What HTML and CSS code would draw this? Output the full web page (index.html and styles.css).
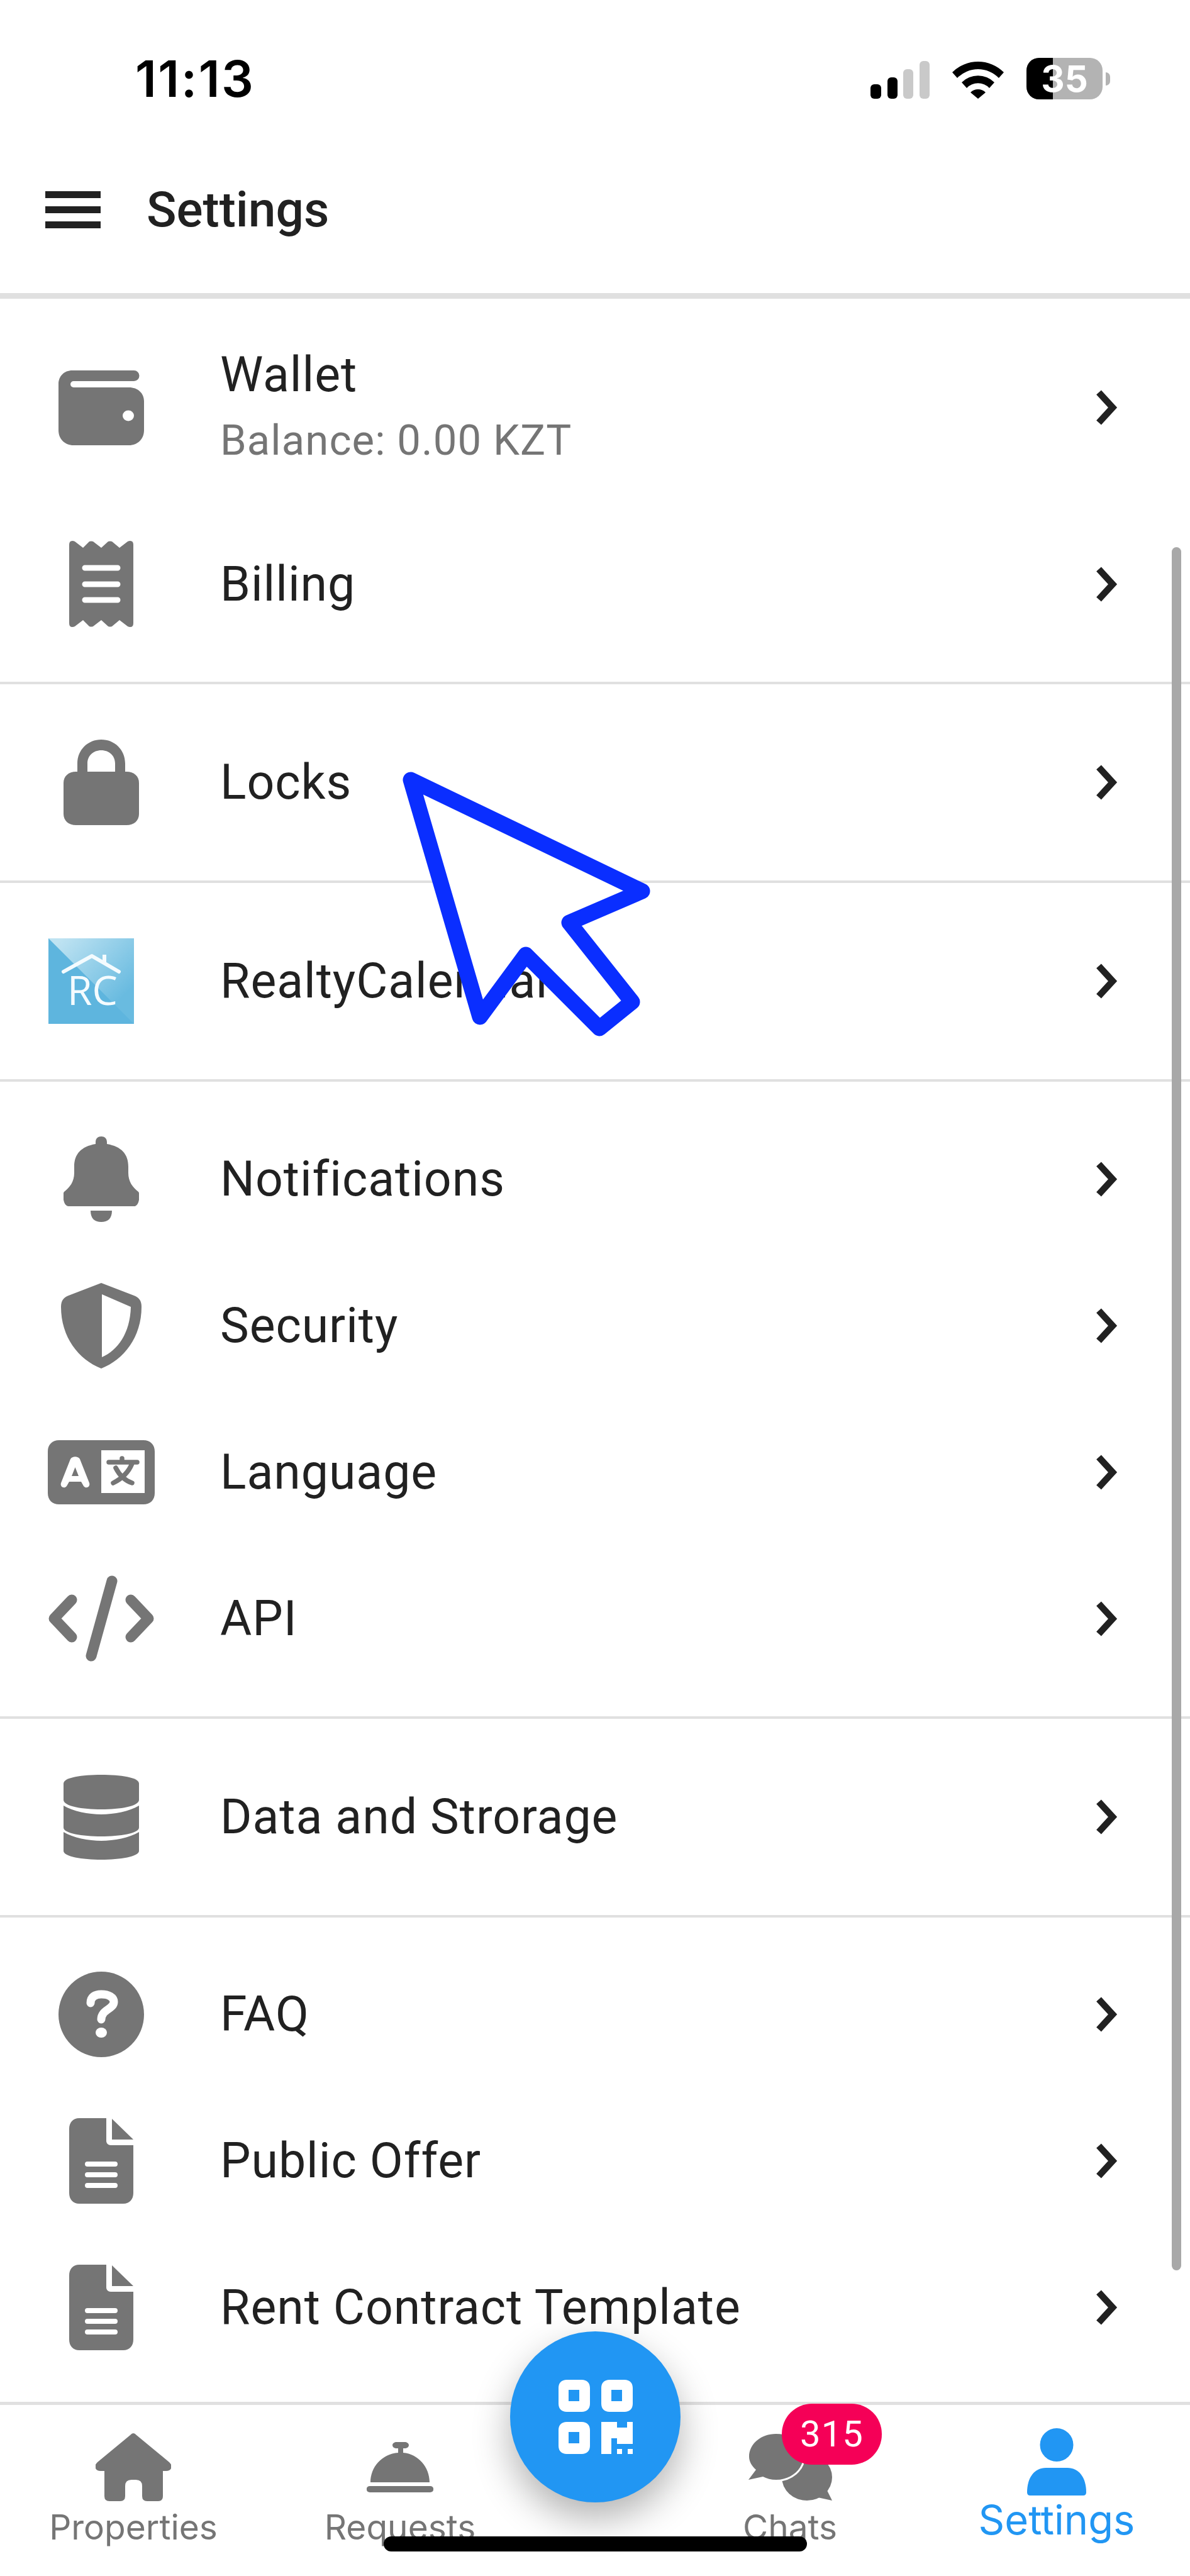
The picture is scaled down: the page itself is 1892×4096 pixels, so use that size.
FILE: index.html
```html
<!DOCTYPE html>
<html lang="en">
<head>
<meta charset="utf-8">
<title>Settings</title>
<link rel="stylesheet" href="styles.css">
</head>
<body>
<div class="phone">
  <div class="status">
    <span class="time">11:13</span>
    <div class="status-icons">
      <svg class="signal" width="94" height="60" viewBox="0 0 94 60"><rect x="0" y="37" width="17" height="23" rx="6" fill="#000"/><rect x="27" y="26" width="16" height="34" rx="6" fill="#000"/><rect x="52" y="13" width="16" height="47" rx="6" fill="#c9c9c9"/><rect x="78" y="0" width="16" height="60" rx="6" fill="#c9c9c9"/></svg>
      <svg class="wifi" width="82" height="60" viewBox="0 0 82 60"><path d="M0 18 A58 58 0 0 1 82 18 L74 27 A46 46 0 0 0 8 27Z" fill="#000"/><path d="M15 34 A37 37 0 0 1 67 34 L59 43 A25 25 0 0 0 23 43Z" fill="#000"/><path d="M29 50 A17 17 0 0 1 53 50 L41 60Z" fill="#000"/></svg>
      <div class="battery">
        <div class="battery-body"><div class="battery-level"></div><span class="battery-text">35</span></div>
        <div class="battery-nub"></div>
      </div>
    </div>
  </div>
  <header class="appbar">
    <div class="burger"><i></i><i></i><i></i></div>
    <h1 class="title">Settings</h1>
  </header>
  <main class="list">
    <section class="group money">
      <div class="row two-line">
        <div class="lead"><svg width="136" height="119" viewBox="0 0 136 119"><path fill="#757575" d="M22 0H120a8.500 8.500 0 0 1 0 17H24a5 5 0 0 0 0 10H112c14 0 24 9 24 22V95c0 14-10 24-24 24H24C10 119 0 109 0 95V22C0 9 9 0 22 0Z"/><ellipse cx="111" cy="72" rx="9" ry="8.500" fill="#fff"/></svg></div>
        <div class="text"><span class="label">Wallet</span><span class="sub">Balance: 0.00 KZT</span></div>
        <svg class="chev" width="40" height="58" viewBox="0 0 40 58"><path d="M6 5 L28 29 L6 53" fill="none" stroke="#212121" stroke-width="10.500"/></svg>
      </div>
      <div class="row tight">
        <div class="lead"><svg width="102" height="137" viewBox="0 0 102 137"><path fill="#757575" fill-rule="evenodd" d="M0 6Q0 0 5 0Q7 0 9 1L22 11L32 1Q35 0 38 1L51 11L62 1Q65 0 68 1L80 11L93 1Q95 0 97 0Q102 0 102 6V131Q102 137 97 137Q95 137 93 136L80 126L68 136Q65 137 62 136L51 126L38 136Q35 137 32 136L22 126L9 136Q7 137 5 137Q0 137 0 131ZM25 38.500a4.500 4.500 0 0 0 0 9H77a4.500 4.500 0 0 0 0-9ZM25 64.500a4.500 4.500 0 0 0 0 9H77a4.500 4.500 0 0 0 0-9ZM25 89.500a4.500 4.500 0 0 0 0 9H77a4.500 4.500 0 0 0 0-9Z"/></svg></div>
        <div class="text"><span class="label">Billing</span></div>
        <svg class="chev" width="40" height="58" viewBox="0 0 40 58"><path d="M6 5 L28 29 L6 53" fill="none" stroke="#212121" stroke-width="10.500"/></svg>
      </div>
    </section>
    <section class="group">
      <div class="row single">
        <div class="lead"><svg width="120" height="136" viewBox="0 0 120 136"><path fill="#757575" d="M22 60V38C22 16 39 0 60 0S98 16 98 38V60H82V38C82 26 73 17 60 17S38 26 38 38V60Z"/><path fill="#757575" d="M20 51H100C112 51 120 58 120 69V118C120 129 112 136 100 136H20C8 136 0 129 0 118V69C0 58 8 51 20 51Z"/></svg></div>
        <div class="text"><span class="label">Locks</span></div>
        <svg class="chev" width="40" height="58" viewBox="0 0 40 58"><path d="M6 5 L28 29 L6 53" fill="none" stroke="#212121" stroke-width="10.500"/></svg>
      </div>
    </section>
    <section class="group">
      <div class="row single">
        <div class="lead logo"><svg width="136" height="136" viewBox="0 0 136 136"><defs><linearGradient id="rc" x1="0.150" y1="0" x2="0.850" y2="0.700"><stop offset="0" stop-color="#bfe3f2"/><stop offset="1" stop-color="#69bbe0"/></linearGradient></defs><rect width="136" height="136" fill="#5eb5de"/><path d="M0 0H136V136Z" fill="url(#rc)"/><path d="M24 53L69 28L112 53" fill="none" stroke="#f4fbfe" stroke-width="6" stroke-linecap="round" stroke-linejoin="round"/><rect x="86" y="26" width="6" height="15" fill="#f4fbfe"/><text x="70" y="106" text-anchor="middle" class="rc-text">RC</text></svg></div>
        <div class="text"><span class="label">RealtyCalendar</span></div>
        <svg class="chev" width="40" height="58" viewBox="0 0 40 58"><path d="M6 5 L28 29 L6 53" fill="none" stroke="#212121" stroke-width="10.500"/></svg>
      </div>
    </section>
    <section class="group stack">
      <div class="row tight">
        <div class="lead"><svg width="120" height="136" viewBox="0 0 120 136"><path fill="#757575" d="M51 9C51 3 55 0 60 0S69 3 69 9V12C92 16 103 28 103 48V58C103 72 110 81 119 88C122 91 121 111 112 111H8C-1 111 -2 91 1 88C10 81 17 72 17 58V48C17 28 28 16 51 12ZM43 118H77C77 131 70 136 60 136S43 131 43 118Z"/></svg></div>
        <div class="text"><span class="label">Notifications</span></div>
        <svg class="chev" width="40" height="58" viewBox="0 0 40 58"><path d="M6 5 L28 29 L6 53" fill="none" stroke="#212121" stroke-width="10.500"/></svg>
      </div>
      <div class="row tight">
        <div class="lead"><svg width="128" height="136" viewBox="0 0 128 136"><path fill="#757575" fill-rule="evenodd" d="M64 0L116 20C124 23 128 28 128 38C128 86 100 122 64 136C28 122 0 86 0 38C0 28 4 23 12 20ZM65 18V118C90 107 110 80 111 38Z"/></svg></div>
        <div class="text"><span class="label">Security</span></div>
        <svg class="chev" width="40" height="58" viewBox="0 0 40 58"><path d="M6 5 L28 29 L6 53" fill="none" stroke="#212121" stroke-width="10.500"/></svg>
      </div>
      <div class="row tight">
        <div class="lead"><svg width="170" height="102" viewBox="0 0 170 102"><path fill="#757575" fill-rule="evenodd" d="M18 0H152C163 0 170 7 170 18V84C170 95 163 102 152 102H18C7 102 0 95 0 84V18C0 7 7 0 18 0ZM85 16V84H154V16ZM36 30L21 68C19 74 26 78 30 73L34 66H53L57 73C61 78 68 74 66 68L51 30C48 25 39 25 36 30ZM38 57H49L43.500 43Z"/><path d="M97 35H142M118 29V35M134 37C128 52 116 62 104 68M108 44C114 56 122 64 134 68" fill="none" stroke="#757575" stroke-width="7.500" stroke-linecap="round"/></svg></div>
        <div class="text"><span class="label">Language</span></div>
        <svg class="chev" width="40" height="58" viewBox="0 0 40 58"><path d="M6 5 L28 29 L6 53" fill="none" stroke="#212121" stroke-width="10.500"/></svg>
      </div>
      <div class="row tight">
        <div class="lead"><svg width="170" height="137" viewBox="0 0 170 137"><path d="M38 39L10 68.500L38 98M132 39L160 68.500L132 98" fill="none" stroke="#757575" stroke-width="17" stroke-linecap="round" stroke-linejoin="round"/><path d="M102 9L69 128" fill="none" stroke="#757575" stroke-width="17" stroke-linecap="round"/></svg></div>
        <div class="text"><span class="label">API</span></div>
        <svg class="chev" width="40" height="58" viewBox="0 0 40 58"><path d="M6 5 L28 29 L6 53" fill="none" stroke="#212121" stroke-width="10.500"/></svg>
      </div>
    </section>
    <section class="group">
      <div class="row single">
        <div class="lead"><svg width="120" height="135" viewBox="0 0 120 135"><g fill="#757575"><path d="M0 14C0 4 30 0 60 0S120 4 120 14V40C120 50 90 55 60 55S0 50 0 40Z"/><path d="M0 49C15 58 40 63 60 63S105 58 120 49V84C120 93 90 98 60 98S0 93 0 84Z"/><path d="M0 91C15 100 40 105 60 105S105 100 120 91V121C120 130 90 135 60 135S0 130 0 121Z"/></g></svg></div>
        <div class="text"><span class="label">Data and Strorage</span></div>
        <svg class="chev" width="40" height="58" viewBox="0 0 40 58"><path d="M6 5 L28 29 L6 53" fill="none" stroke="#212121" stroke-width="10.500"/></svg>
      </div>
    </section>
    <section class="group docs">
      <div class="row tight">
        <div class="lead"><svg width="136" height="136" viewBox="0 0 136 136"><circle cx="68" cy="68" r="68" fill="#757575"/><path d="M51 50C51 40 58 36 68 36C80 36 88 41 88 48C88 60 68 60 68 76" fill="none" stroke="#fff" stroke-width="13" stroke-linecap="round"/><ellipse cx="68" cy="97" rx="9" ry="8" fill="#fff"/></svg></div>
        <div class="text"><span class="label">FAQ</span></div>
        <svg class="chev" width="40" height="58" viewBox="0 0 40 58"><path d="M6 5 L28 29 L6 53" fill="none" stroke="#212121" stroke-width="10.500"/></svg>
      </div>
      <div class="row tight">
        <div class="lead"><svg width="102" height="136" viewBox="0 0 102 136"><path fill="#757575" fill-rule="evenodd" d="M16 0H59V36C59 40 62 43 66 43H102V119C102 129 96 136 86 136H16C6 136 0 129 0 119V17C0 7 6 0 16 0ZM29 69a4 4 0 0 0 0 8H73a4 4 0 0 0 0-8ZM29 86a4 4 0 0 0 0 8H73a4 4 0 0 0 0-8ZM29 103a4 4 0 0 0 0 8H73a4 4 0 0 0 0-8Z"/><path fill="#757575" d="M68 1L102 34H68Z"/></svg></div>
        <div class="text"><span class="label">Public Offer</span></div>
        <svg class="chev" width="40" height="58" viewBox="0 0 40 58"><path d="M6 5 L28 29 L6 53" fill="none" stroke="#212121" stroke-width="10.500"/></svg>
      </div>
      <div class="row tight">
        <div class="lead"><svg width="102" height="136" viewBox="0 0 102 136"><path fill="#757575" fill-rule="evenodd" d="M16 0H59V36C59 40 62 43 66 43H102V119C102 129 96 136 86 136H16C6 136 0 129 0 119V17C0 7 6 0 16 0ZM29 69a4 4 0 0 0 0 8H73a4 4 0 0 0 0-8ZM29 86a4 4 0 0 0 0 8H73a4 4 0 0 0 0-8ZM29 103a4 4 0 0 0 0 8H73a4 4 0 0 0 0-8Z"/><path fill="#757575" d="M68 1L102 34H68Z"/></svg></div>
        <div class="text"><span class="label">Rent Contract Template</span></div>
        <svg class="chev" width="40" height="58" viewBox="0 0 40 58"><path d="M6 5 L28 29 L6 53" fill="none" stroke="#212121" stroke-width="10.500"/></svg>
      </div>
    </section>
  </main>
  <nav class="tabs">
    <div class="tab">
      <div class="tab-icon"><svg width="120" height="108" viewBox="0 0 120 108"><path fill="#757575" d="M55 3Q60 -3 65 3L117 46Q123 52 120 56Q118 60 112 60H107V100Q107 108 99 108H82Q74 108 74 100V84Q74 74 64 74H57Q47 74 47 84V100Q47 108 39 108H22Q14 108 14 100V60H8Q2 60 0 56Q-3 52 3 46Z"/></svg></div>
      <span class="tab-label">Properties</span>
    </div>
    <div class="tab">
      <div class="tab-icon"><svg width="106" height="80" viewBox="0 0 106 80"><path fill="#757575" d="M41 5C41 2 44 0 48 0H60C64 0 67 2 67 5S64 10 60 10H58V17C82 19 100 40 100 64H6C6 40 24 19 50 17V10H48C44 10 41 8 41 5ZM5 70H101C108 70 108 80 101 80H5C-2 80 -2 70 5 70Z"/></svg></div>
      <span class="tab-label">Requests</span>
    </div>
    <div class="tab-gap"></div>
    <div class="tab">
      <div class="tab-icon"><svg width="133" height="106" viewBox="0 0 133 106"><ellipse cx="93" cy="69" rx="40" ry="37" fill="#757575"/><path fill="#757575" d="M122 84L133 106L110 101Z"/><path fill="#757575" stroke="#fff" stroke-width="6" paint-order="stroke" d="M44 0C68 0 87 16 87 36C87 56 68 73 44 73C36 73 29 71 23 68L0 73L12 57C5 51 1 44 1 36C1 16 20 0 44 0Z"/></svg></div>
      <span class="tab-label">Chats</span>
    </div>
    <div class="tab active">
      <div class="tab-icon"><svg width="94" height="107" viewBox="0 0 94 107"><circle cx="47" cy="26.500" r="26.500" fill="#2196f3"/><path fill="#2196f3" d="M30 63H64C82 63 94 78 94 102Q94 107 89 107H5Q0 107 0 102C0 78 12 63 30 63Z"/></svg></div>
      <span class="tab-label">Settings</span>
    </div>
  </nav>
  <div class="scrollbar"></div>
  <svg class="cursor" width="500" height="500" viewBox="0 0 500 500"><path d="M73 60L441 237L325 287L425 413L373 455L256 338L183 437Z" fill="#fff" stroke="#0a2eff" stroke-width="25" stroke-linejoin="round"/></svg>
  <div class="fab">
    <svg width="118" height="118" viewBox="0 0 118 118"><g fill="#fff" fill-rule="evenodd"><path d="M13 0H37C45 0 50 5 50 13V38C50 46 45 51 37 51H13C5 51 0 46 0 38V13C0 5 5 0 13 0ZM16 16V34H33V16Z"/><path d="M81 0H105C113 0 118 5 118 13V38C118 46 113 51 105 51H81C73 51 68 46 68 38V13C68 5 73 0 81 0ZM84 16V34H101V16Z"/><path d="M13 67H37C45 67 50 72 50 80V105C50 113 45 118 37 118H13C5 118 0 113 0 105V80C0 72 5 67 13 67ZM16 83V101H33V83Z"/><path d="M68 67H93V76H109V67H118V102H93V93H84V118H68ZM93 110H101V118H93ZM110 110H118V118H110Z"/></g></svg>
  </div>
  <span class="badge">315</span>
  <div class="home-indicator"></div>
</div>
</body>
</html>
```
FILE: styles.css
```css
* { box-sizing: border-box; }
html, body { margin: 0; padding: 0; background: #fff; }

.phone {
  position: relative;
  width: 1892px;
  height: 4096px;
  overflow: hidden;
  background: #fff;
  font-family: Roboto, "Noto Sans", sans-serif;
  color: #212121;
}

/* Status bar */
.status {
  height: 211px;
  padding: 92px 127px 0 215px;
  display: flex;
  justify-content: space-between;
  align-items: flex-start;
}
.time {
  font-family: Inter, sans-serif;
  font-weight: 600;
  font-size: 80px;
  line-height: 66px;
  letter-spacing: 2.500px;
  color: #000;
}
.status-icons { display: flex; align-items: center; }
.signal { margin: 3px 36px 0 0; }
.wifi { margin: 3px 36px 0 0; }
.battery { display: flex; align-items: center; gap: 5px; }
.battery-body {
  position: relative;
  width: 121px;
  height: 66px;
  border-radius: 20px;
  background: #b3b3b3;
  display: flex;
  align-items: center;
  justify-content: center;
}
.battery-level {
  position: absolute;
  left: 0;
  top: 0;
  bottom: 0;
  width: 42px;
  border-radius: 20px 0 0 20px;
  background: #000;
}
.battery-text {
  position: relative;
  font-family: Inter, sans-serif;
  font-weight: 700;
  font-size: 58px;
  line-height: 66px;
  color: #fff;
}
.battery-nub { width: 7px; height: 21px; background: #b3b3b3; border-radius: 0 10px 10px 0; }

/* App bar */
.appbar {
  height: 264px;
  padding: 0 0 10px 72px;
  display: flex;
  align-items: center;
  border-bottom: 9px solid #e0e0e0;
}
.burger {
  width: 88px;
  height: 59px;
  display: flex;
  flex-direction: column;
  justify-content: space-between;
  margin-right: 73px;
}
.burger i { display: block; height: 11px; background: #212121; }
.title { margin: 0; font-size: 78.500px; font-weight: 500; line-height: 1; color: #212121; }

/* Settings list */
.group { border-bottom: 4px solid #e0e0e0; }
.group.money { padding: 43px 0 39px; }
.group.money .two-line { margin-bottom: 34px; }
.group.stack { padding: 38px 0 39px; }
.group.docs { padding-top: 37px; border-bottom: 0; }
.row { display: flex; align-items: center; padding-right: 111px; }
.row.two-line { height: 260px; }
.row.single { height: 312px; }
.row.tight { height: 233px; }
.lead { width: 322px; margin-right: 28px; display: flex; justify-content: center; flex: none; }
.lead.logo { justify-content: flex-start; padding-left: 77px; }
.text { flex: 1; display: flex; flex-direction: column; }
.label { font-size: 77px; line-height: 104px; letter-spacing: 0.950px; color: #212121; }
.sub { font-size: 67px; line-height: 104px; letter-spacing: 1.090px; color: #757575; }
.chev { flex: none; }
.rc-text { font-family: "Open Sans", sans-serif; font-size: 64px; fill: #f4fbfe; }

/* Bottom tabs */
.tabs {
  position: absolute;
  left: 0;
  right: 0;
  top: 3819px;
  height: 277px;
  display: flex;
  border-top: 5px solid #e0e0e0;
  background: #fff;
}
.tab {
  flex: 0 0 424px;
  display: flex;
  flex-direction: column;
  align-items: center;
  padding-top: 45px;
}
.tab-gap { flex: 1; }
.tab-icon { height: 108px; display: flex; align-items: center; justify-content: center; }
.tab-label {
  font-family: Inter, sans-serif;
  font-size: 55px;
  line-height: 80px;
  margin-top: 1px;
  color: #757575;
}
.tab.active { padding-top: 36px; }
.tab.active .tab-label { font-size: 65px; color: #2196f3; margin-top: -1px; }

/* Floating action button */
.fab {
  position: absolute;
  left: 811px;
  top: 3707px;
  width: 271px;
  height: 272px;
  border-radius: 50%;
  background: #2196f3;
  box-shadow: 0 26px 60px rgba(0, 0, 0, .3);
  display: flex;
  align-items: center;
  justify-content: center;
}
.badge {
  position: absolute;
  left: 1243px;
  top: 3822px;
  width: 159px;
  height: 97px;
  border-radius: 48px;
  background: #f50057;
  color: #fff;
  font-size: 58px;
  letter-spacing: 1px;
  line-height: 97px;
  text-align: center;
}
.home-indicator {
  position: absolute;
  left: 610px;
  top: 4033px;
  width: 673px;
  height: 24px;
  border-radius: 12px;
  background: #000;
}
.scrollbar {
  position: absolute;
  left: 1863px;
  top: 870px;
  width: 15px;
  height: 2740px;
  border-radius: 8px;
  background: #a8a8a8;
}
.cursor { position: absolute; left: 580px; top: 1180px; }
```
